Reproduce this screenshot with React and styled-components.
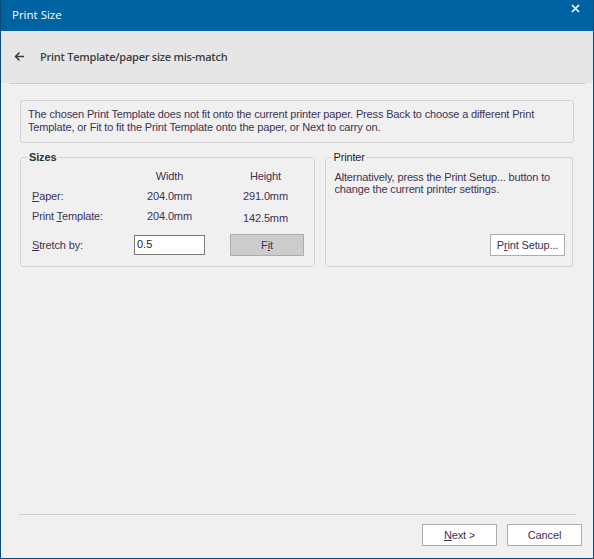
import React, { useState } from 'react'
import styled, { createGlobalStyle } from 'styled-components'

const GlobalStyle = createGlobalStyle`
  html, body {
    margin: 0;
    padding: 0;
    background: #f0f0f0;
  }
  * { box-sizing: border-box; }
`

const Window = styled.div`
  width: 594px;
  height: 559px;
  display: flex;
  flex-direction: column;
  background: #f0f0f0;
  border: 1px solid #0b4d7d;
  border-top: none;
  font-family: "Liberation Sans", Arial, sans-serif;
  font-size: 11px;
  letter-spacing: -0.15px;
  color: #3d3354;
`

const TitleBar = styled.div`
  height: 31px;
  flex: none;
  display: flex;
  align-items: center;
  justify-content: space-between;
  background: #0063a1;
  color: #fff;
  padding: 0 12px 2px 11px;
  font-family: "Open Sans", "Noto Sans", sans-serif;
  font-size: 11.5px;
  letter-spacing: 0;
`

const CloseButton = styled.button`
  border: none;
  background: none;
  padding: 0;
  width: 12px;
  height: 12px;
  display: flex;
  align-items: center;
  justify-content: center;
  margin-top: -13px;
  cursor: pointer;
`

const HeaderBand = styled.div`
  height: 52px;
  flex: none;
  display: flex;
  align-items: center;
  gap: 15px;
  padding: 0 0 2px 13px;
  background: #e6e6e6;
  color: #404040;
  font-family: "Open Sans", "Noto Sans", sans-serif;
  font-weight: 600;
  font-size: 11px;
  letter-spacing: -0.25px;
`

const BackArrow = styled.button`
  border: none;
  background: none;
  padding: 0;
  width: 11px;
  height: 11px;
  display: flex;
  cursor: pointer;
`

const Separator = styled.div`
  flex: none;
  height: 1px;
  background: #cdcdcd;
  margin: ${p => p.$margin || '0 8px'};
`

const Content = styled.div`
  flex: 1;
  padding: 16px 19px 0 19px;
  display: flex;
  flex-direction: column;
`

const InfoBox = styled.div`
  height: 43px;
  border: 1px solid #d3d3d3;
  border-radius: 3px;
  padding: 7px 7px;
  line-height: 13px;
`

const GroupRow = styled.div`
  display: flex;
  gap: 10px;
  margin-top: 8px;
  margin-right: 1px;
`

const Group = styled.fieldset`
  margin: 0;
  min-inline-size: 0;
  width: ${p => p.$width}px;
  height: 116px;
  border: 1px solid #d5d5d5;
  border-radius: 3px;
  padding: 0 ${p => p.$padRight}px 10px ${p => p.$padLeft}px;
  display: flex;
  flex-direction: column;
`

const Legend = styled.legend`
  padding: 0 1px;
  margin-left: ${p => p.$offset}px;
  line-height: 13px;
  font-weight: ${p => (p.$bold ? 700 : 400)};
  color: ${p => (p.$bold ? '#333' : '#1e1e1e')};
`

const SizeGrid = styled.div`
  display: grid;
  grid-template-columns: 102px 71px 99px;
  grid-auto-rows: 20px;
  align-items: center;
  margin-top: 2px;
`

const Cell = styled.div`
  text-align: center;
  padding-top: ${p => p.$drop || 0}px;
  padding-left: ${p => (p.$last ? 22 : 0)}px;
`

const StretchRow = styled.div`
  display: grid;
  grid-template-columns: 102px 71px 99px;
  align-items: center;
  margin-top: 8px;
`

const ButtonCell = styled.div`
  padding-left: 25px;
  display: flex;
`

const Input = styled.input`
  width: 71px;
  height: 20px;
  border: 1px solid #7a7a7a;
  background: #fff;
  padding: 0 2px 2px;
  font-family: inherit;
  font-size: 11px;
  color: #222;
  outline: none;
  line-height: 14px;
`

const Button = styled.button`
  width: ${p => p.$width || 75}px;
  height: 22px;
  margin: 0;
  padding: 0 0 1px;
  border: 1px solid #adadad;
  background: ${p => (p.$disabled ? '#cccccc' : '#ffffff')};
  font-family: "Liberation Sans", Arial, sans-serif;
  font-size: 11px;
  letter-spacing: -0.15px;
  color: #3d3354;
  cursor: pointer;

  u { text-underline-offset: 1px; }
`

const PrinterText = styled.div`
  line-height: 12px;
  margin-top: 7px;
  padding-left: 1px;
  white-space: nowrap;
`

const Spacer = styled.div`
  flex: 1;
`

const ButtonRight = styled.div`
  display: flex;
  justify-content: flex-end;
`

const Footer = styled.div`
  flex: none;
  display: flex;
  flex-direction: column;
  padding-bottom: 12px;
`

const FooterButtons = styled.div`
  display: flex;
  justify-content: flex-end;
  gap: 10px;
  padding: 9px 11px 0 0;
`

const App = () => {
  const [stretch, setStretch] = useState('0.5')

  return (
    <>
      <GlobalStyle />
      <Window>
        <TitleBar>
          <span>Print Size</span>
          <CloseButton aria-label="Close">
            <svg width="9" height="9" viewBox="0 0 9 9">
              <path d="M1 1 L8 8 M8 1 L1 8" stroke="#fff" strokeWidth="1.6" />
            </svg>
          </CloseButton>
        </TitleBar>
        <HeaderBand>
          <BackArrow aria-label="Back">
            <svg width="11" height="11" viewBox="0 0 11 11">
              <path d="M10 5.5 H1.8 M5.5 1.5 L1.5 5.5 L5.5 9.5" stroke="#3a3a3a" strokeWidth="1.5" fill="none" />
            </svg>
          </BackArrow>
          <span>Print Template/paper size mis-match</span>
        </HeaderBand>
        <Separator />
        <Content>
          <InfoBox>
            The chosen Print Template does not fit onto the current printer paper. Press Back to choose a different Print
            Template, or Fit to fit the Print Template onto the paper, or Next to carry on.
          </InfoBox>
          <GroupRow>
            <Group $width={296} $padLeft={11} $padRight={11}>
              <Legend $offset={-4} $bold>Sizes</Legend>
              <SizeGrid>
                <div />
                <Cell>Width</Cell>
                <Cell $last>Height</Cell>
                <div><u>P</u>aper:</div>
                <Cell>204.0mm</Cell>
                <Cell $last>291.0mm</Cell>
                <div>Print <u>T</u>emplate:</div>
                <Cell>204.0mm</Cell>
                <Cell $last $drop={3}>142.5mm</Cell>
              </SizeGrid>
              <StretchRow>
                <div><u>S</u>tretch by:</div>
                <Input value={stretch} onChange={e => setStretch(e.target.value)} />
                <ButtonCell>
                  <Button $width={74} $disabled>F<u>i</u>t</Button>
                </ButtonCell>
              </StretchRow>
            </Group>
            <Group $width={248} $padLeft={7} $padRight={7}>
              <Legend $offset={-1}>Printer</Legend>
              <PrinterText>
                Alternatively, press the Print Setup... button to
                <br />
                change the current printer settings.
              </PrinterText>
              <Spacer />
              <ButtonRight>
                <Button>P<u>r</u>int Setup...</Button>
              </ButtonRight>
            </Group>
          </GroupRow>
        </Content>
        <Footer>
          <Separator $margin="0 17px 0 18px" />
          <FooterButtons>
            <Button><u>N</u>ext &gt;</Button>
            <Button>Cancel</Button>
          </FooterButtons>
        </Footer>
      </Window>
    </>
  )
}

export default App
